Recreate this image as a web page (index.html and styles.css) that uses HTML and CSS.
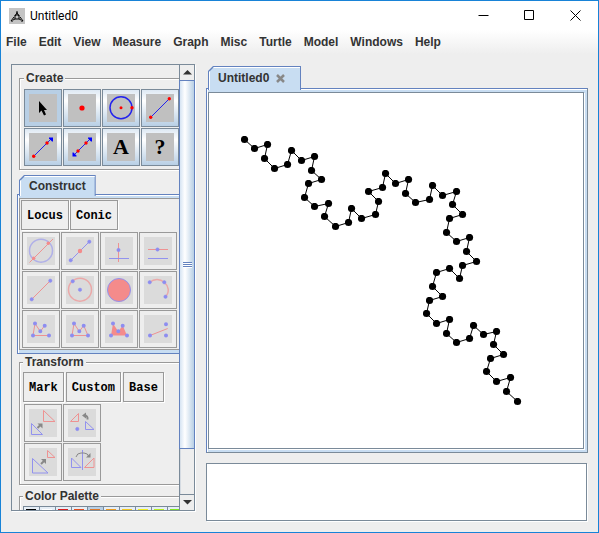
FILE: index.html
```html
<!DOCTYPE html>
<html lang="en">
<head>
<meta charset="utf-8">
<title>Untitled0</title>
<link rel="stylesheet" href="styles.css">
</head>
<body>
<div class="window">
  <header class="titlebar">
    <svg class="app-icon" viewBox="0 0 16 16" aria-hidden="true"><path class="ink" d="M8 3v2M7 5h2M6 8l2-3 2 3M6 7h4v4H6zM5 9l-3 4h2M11 9l3 4h-2M6 11l-2 1M10 11l2 1"/></svg>
    <h1 class="title">Untitled0</h1>
    <div class="window-controls">
      <button class="control" aria-label="Minimize"><svg viewBox="0 0 11 11"><path class="ink" d="M.5 5.500h10"/></svg></button>
      <button class="control" aria-label="Maximize"><svg viewBox="0 0 11 11"><path class="ink" d="M.5 .5h9v9h-9z"/></svg></button>
      <button class="control" aria-label="Close"><svg viewBox="0 0 11 11"><path class="ink" d="M.5 .5l10 10M10.500 .5l-10 10"/></svg></button>
    </div>
  </header>
  <nav class="menubar">
    <button class="menu">File</button>
    <button class="menu">Edit</button>
    <button class="menu">View</button>
    <button class="menu">Measure</button>
    <button class="menu">Graph</button>
    <button class="menu">Misc</button>
    <button class="menu">Turtle</button>
    <button class="menu">Model</button>
    <button class="menu">Windows</button>
    <button class="menu">Help</button>
  </nav>
  <main class="workspace">
    <aside class="toolbox">
      <div class="toolbox-view">
        <div class="toolbox-content">
          <fieldset class="group create">
            <legend>Create</legend>
            <div class="icon-grid">
              <button class="tool active" aria-label="Select"><svg viewBox="0 0 28 28"><path class="solid" d="M10 7v12l2.500-2.500 2.500 5 2-1-2-4.500h3z"/></svg></button>
              <button class="tool" aria-label="Point"><svg viewBox="0 0 28 28"><circle class="red-dot" cx="14" cy="14" r="2.600"/></svg></button>
              <button class="tool" aria-label="Circle"><svg viewBox="0 0 28 28"><circle class="blue-line soft" cx="14" cy="13.700" r="11"/><circle class="red-dot" cx="14" cy="13.700" r="1.500"/><circle class="red-dot" cx="25" cy="13.700" r="1.700"/></svg></button>
              <button class="tool" aria-label="Segment"><svg viewBox="0 0 28 28"><path class="blue-line" d="M4.700 23.300L23.300 4.700"/><circle class="red-dot" cx="4.700" cy="23.300" r="1.700"/><circle class="red-dot" cx="23.300" cy="4.700" r="1.700"/></svg></button>
              <button class="tool" aria-label="Ray"><svg viewBox="0 0 28 28"><path class="blue-line" d="M4.700 23.300L23 5"/><path class="blue-dot" d="M20 4.500h4v4h-1l-3-3z"/><circle class="red-dot" cx="4.700" cy="23.300" r="1.700"/><circle class="red-dot" cx="18" cy="10" r="1.700"/></svg></button>
              <button class="tool" aria-label="Line"><svg viewBox="0 0 28 28"><path class="blue-line" d="M5 23L23 5"/><path class="blue-dot" d="M20 4.500h4v4h-1l-3-3zM4.500 19.500h1l3 3v1h-4z"/><circle class="red-dot" cx="10" cy="18" r="1.700"/><circle class="red-dot" cx="18" cy="10" r="1.700"/></svg></button>
              <button class="tool" aria-label="Text"><span class="glyph">A</span></button>
              <button class="tool" aria-label="Query"><span class="glyph">?</span></button>
            </div>
          </fieldset>

          <section class="construct">
            <button class="tab construct-tab">Construct</button>
            <div class="construct-pane">
              <div class="construct-inner">
                <div class="word-row tight">
                  <button class="word">Locus</button>
                  <button class="word">Conic</button>
                </div>
                <div class="icon-grid disabled">
                  <button class="tool" aria-label="Intersection"><svg viewBox="0 0 28 28"><circle class="blue-line soft" cx="14" cy="13.700" r="11.500"/><path class="red-line" d="M2.500 25.500L26 2"/><circle class="red-dot" cx="21.300" cy="6.300" r="1.700"/><circle class="red-dot" cx="6.700" cy="21.300" r="1.700"/></svg></button>
                  <button class="tool" aria-label="Midpoint"><svg viewBox="0 0 28 28"><path class="blue-line" d="M4.700 23.300L23.300 4.700"/><circle class="blue-dot" cx="4.700" cy="23.300" r="1.700"/><circle class="blue-dot" cx="23.300" cy="4.700" r="1.700"/><circle class="red-dot" cx="14" cy="14" r="2.200"/></svg></button>
                  <button class="tool" aria-label="Perpendicular"><svg viewBox="0 0 28 28"><path class="red-line" d="M13.500 6v19"/><path class="blue-line" d="M4 21.500h20"/><circle class="blue-dot" cx="13.500" cy="13" r="1.700"/></svg></button>
                  <button class="tool" aria-label="Parallel"><svg viewBox="0 0 28 28"><path class="red-line" d="M4 12.500h20"/><path class="blue-line" d="M4 21.500h20"/><circle class="blue-dot" cx="13.500" cy="12.500" r="1.700"/></svg></button>
                  <button class="tool" aria-label="Segment between points"><svg viewBox="0 0 28 28"><path class="red-line" d="M4.700 23.300L23.300 4.700"/><circle class="blue-dot" cx="4.700" cy="23.300" r="1.700"/><circle class="blue-dot" cx="23.300" cy="4.700" r="1.700"/></svg></button>
                  <button class="tool" aria-label="Circle by center"><svg viewBox="0 0 28 28"><circle class="red-line soft" cx="14" cy="13.700" r="11.500"/><circle class="blue-dot" cx="14" cy="13.700" r="1.700"/><circle class="blue-dot" cx="6.700" cy="5.300" r="1.700"/></svg></button>
                  <button class="tool" aria-label="Disc"><svg viewBox="0 0 28 28"><circle class="red-dot" cx="14" cy="14" r="11.500"/><circle class="blue-line" cx="14" cy="14" r="11.500"/></svg></button>
                  <button class="tool" aria-label="Arc"><svg viewBox="0 0 28 28"><path class="red-line soft" d="M5.700 6.300C10 2.500 16 2.500 20.300 6.300S26 16 21.500 20.700"/><circle class="blue-dot" cx="5.700" cy="6.300" r="1.700"/><circle class="blue-dot" cx="20.300" cy="6.300" r="1.700"/><circle class="blue-dot" cx="21.500" cy="20.700" r="1.700"/></svg></button>
                  <button class="tool" aria-label="Polyline"><svg viewBox="0 0 28 28"><path class="red-line" d="M22 20.500H6l2-12 5.300 8 4.400-6"/><path class="nodes" d="M22 20.500h0M6 20.500h0M8 8.500h0M13.300 16.300h0M17.700 10.700h0"/></svg></button>
                  <button class="tool" aria-label="Polygon"><svg viewBox="0 0 28 28"><path class="red-line" d="M22 20.500H6l2-12 5.300 8 4.400-6z"/><path class="nodes" d="M22 20.500h0M6 20.500h0M8 8.500h0M13.300 16.300h0M17.700 10.700h0"/></svg></button>
                  <button class="tool" aria-label="Filled polygon"><svg viewBox="0 0 28 28"><path class="red-dot" d="M22 20.500H6l2-12 5.300 8 4.400-6z"/><path class="nodes" d="M22 20.500h0M6 20.500h0M8 8.500h0M13.300 16.300h0M17.700 10.700h0"/></svg></button>
                  <button class="tool" aria-label="Bisector"><svg viewBox="0 0 28 28"><path class="red-line" d="M6 20.500l17.700-7"/><path class="nodes" d="M6 20.500h0M22 9.300h0M22 20.500h0"/></svg></button>
                </div>
              </div>
            </div>
          </section>

          <fieldset class="group transform">
            <legend>Transform</legend>
            <div class="word-row">
              <button class="word">Mark</button>
              <button class="word">Custom</button>
              <button class="word">Base</button>
            </div>
            <div class="icon-grid pair disabled">
              <button class="tool" aria-label="Translate"><svg viewBox="0 0 28 28"><path class="red-line" d="M14.500 1.500v11h11.500z"/><path class="blue-line" d="M2.500 14.500v11h11z"/><path class="gray-line" d="M8.500 19l3-3"/><path class="gray-fill" d="M8.500 14.500h5v5z"/></svg></button>
              <button class="tool" aria-label="Rotate"><svg viewBox="0 0 28 28"><path class="red-line" d="M10.500 4.500v8H2.500z"/><path class="blue-line" d="M17.500 12.500v8h8.500z"/><circle class="blue-dot" cx="9.300" cy="20" r="1.700"/><path class="gray-line" d="M19.500 10.500Q20 6.500 16.500 6.500"/><path class="gray-fill" d="M14 6.500l4-3v6z"/></svg></button>
              <button class="tool" aria-label="Dilate"><svg viewBox="0 0 28 28"><path class="red-line" d="M18.500 2.500v7h7.500z"/><path class="blue-line" d="M3.500 10.500v14.500h15.500z"/><path class="gray-line" d="M12 16l3-3"/><path class="gray-fill" d="M12 11h5v5z"/></svg></button>
              <button class="tool" aria-label="Reflect"><svg viewBox="0 0 28 28"><path class="blue-line" d="M14.500 2v20M3.500 10v9.500h9.500z"/><path class="red-line" d="M26 10v9.500H16.500z"/><path class="gray-line thin" d="M8 9Q9 5 13 5h3q4 0 5 4"/><path class="gray-fill" d="M18 9.500h4.500V5z"/></svg></button>
            </div>
          </fieldset>

          <fieldset class="group palette">
            <legend>Color Palette</legend>
            <div class="swatches">
              <button class="swatch black" aria-label="Black"></button>
              <button class="swatch white" aria-label="White"></button>
              <button class="swatch red" aria-label="Red"></button>
              <button class="swatch vermilion" aria-label="Vermilion"></button>
              <button class="swatch orange active" aria-label="Orange"></button>
              <button class="swatch amber" aria-label="Amber"></button>
              <button class="swatch gold" aria-label="Gold"></button>
              <button class="swatch yellow" aria-label="Yellow"></button>
              <button class="swatch lime" aria-label="Lime"></button>
              <button class="swatch green" aria-label="Green"></button>
            </div>
          </fieldset>
        </div>
      </div>
      <div class="scrollbar">
        <button class="scroll-button" aria-label="Scroll up"><svg viewBox="0 0 9 5"><path class="arrow" d="M0 4.500L4.500 0 9 4.500z"/></svg></button>
        <div class="thumb"><span class="grip"></span></div>
        <div class="track"></div>
        <button class="scroll-button" aria-label="Scroll down"><svg viewBox="0 0 9 5"><path class="arrow" d="M0 0h9L4.500 4.500z"/></svg></button>
      </div>
    </aside>

    <section class="document">
      <div class="tab document-tab">
        <span>Untitled0</span>
        <button class="tab-close" aria-label="Close tab"><svg viewBox="0 0 9 9"><path class="cross" d="M1 1l7 7M8 1l-7 7"/></svg></button>
      </div>
      <div class="document-pane">
        <svg class="canvas" role="img" aria-label="Chain of points">
          <defs><marker id="node" markerUnits="userSpaceOnUse" markerWidth="8" markerHeight="8" refX="4" refY="4"><circle cx="4" cy="4" r="3.600"/></marker></defs>
          <polyline class="chain" transform="translate(-209 -93)" points="244.500,139.500 254.500,148.500 267.500,144.500 264.500,158.500 274.500,168.500 287.500,164.500 291.500,150.500 301.500,160.500 314.500,156.500 311.500,170.500 321.500,179.500 308.500,183.500 304.500,197.500 314.500,206.500 328.500,203.500 324.500,216.500 335.500,226.500 348.500,222.500 351.500,208.500 361.500,218.500 375.500,214.500 378.500,201.500 368.500,191.500 382.500,187.500 385.500,173.500 395.500,183.500 408.500,179.500 405.500,193.500 415.500,202.500 429.500,199.500 432.500,185.500 442.500,195.500 456.500,191.500 452.500,204.500 462.500,214.500 449.500,218.500 446.500,232.500 456.500,241.500 469.500,237.500 466.500,251.500 476.500,261.500 462.500,265.500 459.500,278.500 449.500,268.500 436.500,272.500 432.500,286.500 442.500,296.500 429.500,300.500 426.500,313.500 436.500,323.500 449.500,319.500 446.500,333.500 456.500,342.500 469.500,338.500 473.500,325.500 483.500,334.500 496.500,331.500 493.500,344.500 503.500,354.500 490.500,358.500 486.500,371.500 496.500,381.500 510.500,377.500 506.500,391.500 517.500,401.500"/>
        </svg>
      </div>
      <textarea class="output" aria-label="Output"></textarea>
    </section>
  </main>
</div>
</body>
</html>
```
FILE: styles.css
```css
* { box-sizing: border-box; }

body {
  margin: 0;
  font: bold 12px/14px "Liberation Sans", Arial, sans-serif;
  color: #333;
  background: #eee;
}

button {
  font: inherit;
  color: inherit;
  margin: 0;
  padding: 0;
  border: 0;
  background: none;
}

svg { display: block; }

.window {
  height: 100vh;
  display: flex;
  flex-direction: column;
  border: 1px solid #1883d7;
  background: #eee;
}

/* Title bar */
.titlebar {
  flex: none;
  height: 29px;
  display: flex;
  align-items: center;
  gap: 5px;
  padding-left: 8px;
  background: #fff;
  color: #000;
}
.app-icon { width: 16px; height: 16px; background: #c4c4c4; }
.title {
  flex: 1;
  margin: 0;
  font: 12px/16px Roboto, "Open Sans", sans-serif;
}
.window-controls { display: flex; }
.control { width: 46px; height: 29px; display: grid; place-items: center; }
.control svg { width: 11px; height: 11px; }
.ink { fill: none; stroke: #000; }

/* Menu bar */
.menubar {
  flex: none;
  height: 24px;
  display: flex;
  align-items: center;
  gap: 12px;
  padding-left: 5px;
  background: linear-gradient(#fff, #eee);
}

.workspace {
  flex: 1;
  min-height: 0;
  display: flex;
  gap: 11px;
  padding: 10px;
}

/* Toolbox */
.toolbox {
  flex: none;
  width: 184px;
  margin-bottom: 11px;
  display: flex;
  border: 1px solid #7a8a99;
  border-right: 0;
  box-shadow: 1px 1px #fff;
}
.toolbox-view { flex: 1; min-width: 0; overflow: hidden; }
.toolbox-content { width: 260px; padding: 6px 5px; }

.group {
  min-width: 0;
  margin: 0 0 0 2px;
  padding: 4px;
  border: 1px solid #999;
  box-shadow: 1px 1px #fff, inset 1px 1px #fff;
}
.group legend { padding: 0 2px; background: #eee; }
.create { padding-bottom: 3px; }
.transform { margin-top: 1px; padding: 3px; }
.palette { margin-top: 4px; padding: 3px; }

.icon-grid { display: grid; grid-template-columns: repeat(4, 38px); gap: 1px; }
.icon-grid.pair { grid-template-columns: repeat(2, 38px); margin: 2px 1px 0; }

.tool {
  width: 38px;
  height: 38px;
  padding: 4px;
  border: 1px solid #7a8a99;
  background: linear-gradient(#dde8f3, #fff 30%, #b8cfe5);
}
.tool.active { background: #b8cfe5; }
.tool svg, .glyph { width: 28px; height: 28px; background: #c0c0c0; }
.glyph {
  display: block;
  color: #000;
  font: bold 22px/28px "Liberation Serif", "Times New Roman", serif;
}

.red-dot { fill: #f00; }
.blue-dot { fill: #00f; }
.red-line, .blue-line { fill: none; stroke-width: 1; }
.red-line { stroke: #f00; }
.blue-line { stroke: #22e; }
.nodes { stroke: #00f; stroke-width: 4; stroke-linecap: round; }
.solid { fill: #000; }
.gray-line { fill: none; stroke: #888; stroke-width: 2; }
.gray-line.thin { stroke-width: 1; }
.gray-fill { fill: #888; }
.soft { stroke-width: 1.5; }

.disabled .tool { border-color: #999; background: #eee; }
.disabled .tool svg { background: #dbdbdb; }
.disabled .red-dot { fill: #f48b8b; }
.disabled .blue-dot { fill: #8d8df0; stroke: #8d8df0; stroke-width: .5; }
.disabled .red-line { stroke: #ee9292; }
.disabled .blue-line { stroke: #9292ee; }
.disabled .nodes { stroke: #8d8df0; }
.disabled .red-line.soft { stroke: #eba8a8; }
.disabled .blue-line.soft { stroke: #b0b0e8; }

.word-row { display: flex; gap: 2px; }
.word-row.tight { gap: 1px; }
.word {
  height: 30px;
  padding: 2px 5px 0;
  border: 1px solid #999;
  box-shadow: 1px 1px #fff;
  color: #000;
  font: bold 12px/16px "Liberation Mono", "Courier New", monospace;
}

/* Tabs */
.tab {
  position: relative;
  z-index: 1;
  background: #6382bf;
  clip-path: polygon(0 5px, 5px 0, 100% 0, 100% 100%, 0 100%);
}
.tab::before {
  content: "";
  position: absolute;
  inset: 1px 1px 0;
  z-index: -1;
  background: #c8ddf2;
  box-shadow: inset 1px 1px #fff;
  clip-path: polygon(0 5px, 5px 0, 100% 0, 100% 100%, 0 100%);
}

.construct { margin-top: 5px; }
.construct-tab {
  display: block;
  height: 21px;
  margin: 0 0 -2px 2px;
  padding: 0 10px;
}
.construct-pane {
  padding: 3px 1px;
  border: 1px solid #6382bf;
  background: #c8ddf2;
  box-shadow: inset 1px 1px #fff;
}
.construct-inner {
  padding: 1px;
  border: 1px solid #999;
  background: #eee;
}
.construct-inner .icon-grid { margin: 2px 1px 0; }

/* Palette */
.swatches { display: flex; height: 16px; }
.swatch {
  width: 17px;
  margin-right: -1px;
  flex: none;
  height: 16px;
  padding: 2px 3px 2px 2px;
  border: 1px solid #7a8a99;
  background-color: #e6eef6;
}
.swatch.active { background-color: #b8cfe5; }
.swatch::before { content: ""; display: block; height: 10px; background: currentColor; }
.black { color: #000; }
.white { color: #fff; }
.red { color: #d81c1c; }
.vermilion { color: #e84c1c; }
.orange { color: #e07828; }
.amber { color: #f09c1c; }
.gold { color: #f4c81c; }
.yellow { color: #f0f01c; }
.lime { color: #b8f01c; }
.green { color: #80e81c; }

/* Scrollbar */
.scrollbar {
  flex: none;
  width: 16px;
  display: flex;
  flex-direction: column;
  border: solid #7a8a99;
  border-width: 0 1px;
}
.scroll-button { height: 15px; flex: none; display: grid; place-items: center; }
.scroll-button svg { width: 9px; height: 5px; }
.arrow { fill: #333; }
.thumb {
  flex: 370;
  margin: 0 -1px;
  display: grid;
  place-items: center;
  border: 1px solid #6382bf;
  background: linear-gradient(90deg, #d6e4f3, #fff 35%, #b8cfe5);
}
.grip {
  width: 9px;
  height: 6px;
  background: repeating-linear-gradient(#6382bf 0 1px, #fff 1px 2px);
}
.track {
  flex: 45;
  border-bottom: 1px solid #7a8a99;
  box-shadow: inset 1px 0 #d5dbe2;
}

/* Document area */
.document {
  flex: 1;
  min-width: 0;
  display: flex;
  flex-direction: column;
  padding-top: 2px;
}
.document-tab {
  align-self: flex-start;
  display: flex;
  align-items: center;
  gap: 7px;
  height: 24px;
  margin: 0 0 -2px 2px;
  padding: 0 16px 0 10px;
}
.tab-close svg { width: 9px; height: 9px; }
.cross { fill: none; stroke: #888; stroke-width: 2.5; }
.document-pane {
  flex: 1;
  min-height: 0;
  padding: 3px 3px 3px 1px;
  border: 1px solid #7a8a99;
  border-top-color: #6382bf;
  border-left-color: #6382bf;
  background: #c8ddf2;
  box-shadow: inset 1px 1px #fff;
}
.canvas {
  width: 100%;
  height: 100%;
  border: 1px solid #7a8a99;
  background: #fff;
  box-shadow: 1px 1px #fff;
}
.chain {
  fill: none;
  stroke: #000;
  marker-start: url(#node);
  marker-mid: url(#node);
  marker-end: url(#node);
}
.output {
  flex: none;
  height: 58px;
  margin: 10px 1px 1px 0;
  border: 1px solid #7a8a99;
  border-radius: 0;
  background: #fff;
  box-shadow: 1px 1px #fff;
  resize: none;
}
```
